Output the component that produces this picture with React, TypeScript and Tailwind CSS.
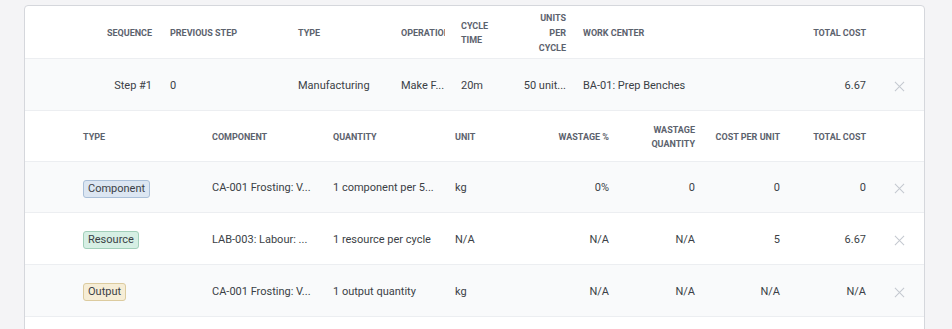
import React from 'react';

const XIcon = () => (
  <svg width="11" height="11" viewBox="0 0 12 12" fill="none" stroke="#c4c8cf" strokeWidth="1.1">
    <path d="M1 1L11 11M11 1L1 11" />
  </svg>
);

const stepCols = 'grid grid-cols-[135px_130px_103px_60px_57px_64px_186px_114px_50px]';
const itemCols = 'grid grid-cols-[179px_121px_122px_83px_87px_86px_85px_86px_50px]';

const badgeStyles: Record<string, string> = {
  Component: 'bg-[#dce6f2] border-[#aabfd8]',
  Resource: 'bg-[#d6efe4] border-[#a2cfba]',
  Output: 'bg-[#f6edd6] border-[#dccb9f]',
};

const items = [
  { type: 'Component', comp: 'CA-001 Frosting: V...', qty: '1 component per 5...', unit: 'kg', wp: '0%', wq: '0', cpu: '0', total: '0' },
  { type: 'Resource', comp: 'LAB-003: Labour: ...', qty: '1 resource per cycle', unit: 'N/A', wp: 'N/A', wq: 'N/A', cpu: '5', total: '6.67' },
  { type: 'Output', comp: 'CA-001 Frosting: V...', qty: '1 output quantity', unit: 'kg', wp: 'N/A', wq: 'N/A', cpu: 'N/A', total: 'N/A' },
];

function App() {
  return (
    <div className="w-[952px] h-[329px] overflow-hidden bg-[#f4f4f6] pt-[5px] pl-[24px] font-['Roboto',sans-serif] text-[11px] text-[#3b3f46]">
      <div className="w-[901px] h-[340px] bg-white border border-[#d5d7dc] rounded-[4px] overflow-hidden">
        {/* Step header */}
        <div className={`${stepCols} h-[53px] pt-[2px] items-center text-[9px] font-bold uppercase text-[#5c626d] leading-[15px] border-b border-[#eceef1]`}>
          <div className="text-right pr-[8px]">Sequence</div>
          <div className="pl-[10px]">Previous Step</div>
          <div className="pl-[8px]">Type</div>
          <div className="pl-[8px] pr-[8px]">
            <div className="overflow-hidden whitespace-nowrap">Operation</div>
          </div>
          <div className="pl-[8px] leading-[14px]">Cycle<br />Time</div>
          <div className="text-right pr-[8px]">Units<br />Per<br />Cycle</div>
          <div className="pl-[9px]">Work Center</div>
          <div className="text-right pr-[8px]">Total Cost</div>
          <div />
        </div>
        {/* Step row */}
        <div className={`${stepCols} h-[52px] pt-[4px] items-center bg-[#f9fafb] border-b border-[#eceef1]`}>
          <div className="text-right pr-[8px]">Step #1</div>
          <div className="pl-[10px]">0</div>
          <div className="pl-[8px]">Manufacturing</div>
          <div className="pl-[8px] pr-[4px] whitespace-nowrap">Make F...</div>
          <div className="pl-[8px]">20m</div>
          <div className="text-right pr-[8px] whitespace-nowrap">50 unit...</div>
          <div className="pl-[9px]">BA-01: Prep Benches</div>
          <div className="text-right pr-[8px]">6.67</div>
          <div className="flex justify-center"><XIcon /></div>
        </div>
        {/* Items header */}
        <div className={`${itemCols} h-[51px] pt-[2px] items-center text-[9px] font-bold uppercase text-[#5c626d] leading-[14px] border-b border-[#eceef1]`}>
          <div className="pl-[58px]">Type</div>
          <div className="pl-[8px]">Component</div>
          <div className="pl-[8px]">Quantity</div>
          <div className="pl-[8px]">Unit</div>
          <div className="text-right pr-[8px]">Wastage %</div>
          <div className="text-right pr-[8px]">Wastage<br />Quantity</div>
          <div className="text-right pr-[8px] whitespace-nowrap">Cost Per Unit</div>
          <div className="text-right pr-[8px]">Total Cost</div>
          <div />
        </div>
        {items.map((it, i) => (
          <div
            key={it.type}
            className={`${itemCols} ${i === 0 ? 'h-[51px]' : 'h-[52px]'} pt-[3px] items-center border-b border-[#eceef1] ${i % 2 === 0 ? 'bg-[#f9fafb]' : 'bg-white'}`}
          >
            <div className="pl-[58px]">
              <span className={`inline-block border rounded-[3px] px-[4px] leading-[16px] ${badgeStyles[it.type]}`}>{it.type}</span>
            </div>
            <div className="pl-[8px] whitespace-nowrap">{it.comp}</div>
            <div className="pl-[8px] whitespace-nowrap">{it.qty}</div>
            <div className="pl-[8px]">{it.unit}</div>
            <div className="text-right pr-[8px]">{it.wp}</div>
            <div className="text-right pr-[8px]">{it.wq}</div>
            <div className="text-right pr-[8px]">{it.cpu}</div>
            <div className="text-right pr-[8px]">{it.total}</div>
            <div className="flex justify-center"><XIcon /></div>
          </div>
        ))}
      </div>
    </div>
  );
}

export default App;
